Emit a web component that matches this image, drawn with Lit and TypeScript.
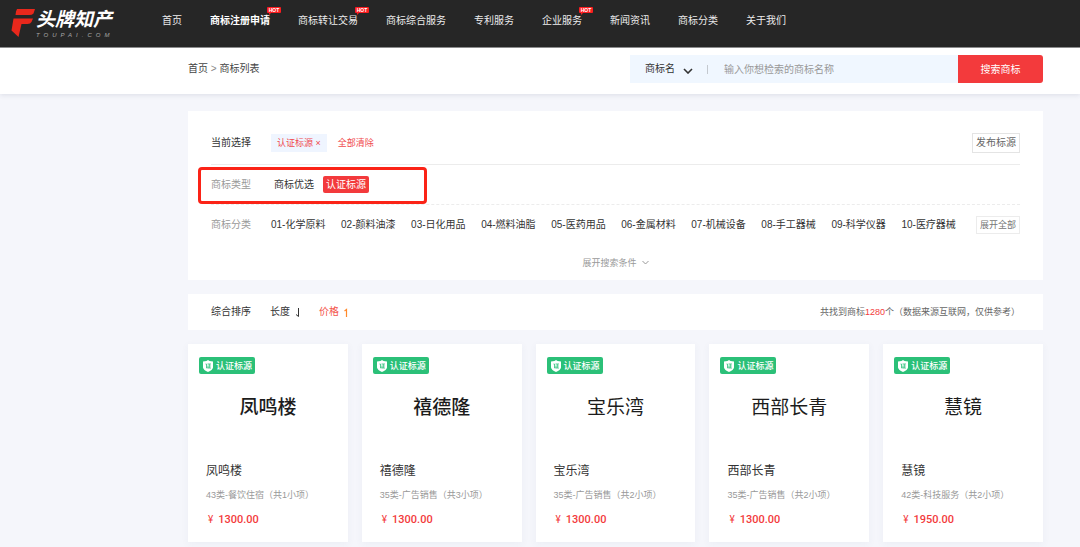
import { LitElement, html, css, svg, nothing } from "lit";
import { customElement, property } from "lit/decorators.js";
import { classMap } from "lit/directives/class-map.js";

interface Mark {
  name: string;
  kind: string;
  price: string;
  face: string;
}

const NAV = [
  { label: "首页" },
  { label: "商标注册申请", hot: true, active: true },
  { label: "商标转让交易", hot: true },
  { label: "商标综合服务" },
  { label: "专利服务" },
  { label: "企业服务", hot: true },
  { label: "新闻资讯" },
  { label: "商标分类" },
  { label: "关于我们" },
];

const CATEGORIES = [
  "01-化学原料", "02-颜料油漆", "03-日化用品", "04-燃料油脂", "05-医药用品",
  "06-金属材料", "07-机械设备", "08-手工器械", "09-科学仪器", "10-医疗器械",
];

const MARKS: Mark[] = [
  { name: "凤鸣楼", kind: "43类-餐饮住宿（共1小项）", price: "1300.00", face: "medium" },
  { name: "禧德隆", kind: "35类-广告销售（共3小项）", price: "1300.00", face: "medium" },
  { name: "宝乐湾", kind: "35类-广告销售（共2小项）", price: "1300.00", face: "regular" },
  { name: "西部长青", kind: "35类-广告销售（共2小项）", price: "1300.00", face: "regular" },
  { name: "慧镜", kind: "42类-科技服务（共2小项）", price: "1950.00", face: "regular" },
];

const base = css`
  * { box-sizing: border-box; }
  a { color: inherit; text-decoration: none; }
  button, select, input {
    font: inherit; color: inherit; border: 0; margin: 0; padding: 0;
    background: none; outline: none;
  }
  button { cursor: pointer; }
`;

@customElement("site-header")
class SiteHeader extends LitElement {
  static styles = [base, css`
    :host { display: block; background: #262626; border-bottom: 1px solid #8f8f8f; }
    .bar { display: flex; height: 47px; }
    .logo { display: flex; width: 162px; padding: 8px 0 0 11px; color: #fff; }
    .mark { width: 25px; height: 30px; flex: none; }
    .words { display: flex; flex-direction: column; }
    .cn { font-size: 19px; line-height: 24px; font-weight: 700; font-style: italic; white-space: nowrap; }
    .en { font: italic 6px/6px "Liberation Sans", sans-serif; letter-spacing: 4px; color: #a8a8a8; white-space: nowrap; }
    .nav { display: flex; gap: 28px; height: 42px; align-items: center; margin: 0; padding: 0; list-style: none; }
    .item { position: relative; color: #ececec; white-space: nowrap; }
    .item.active { font-weight: 700; color: #fff; }
    .hot {
      position: absolute; left: 100%; top: -7px; margin-left: -3px; width: 14px; height: 6px;
      background: #fb1d20; border-radius: 1px; color: #fff; text-align: center;
      font: 700 5px/6px "Liberation Sans", sans-serif;
    }
    .hot::after {
      content: ""; position: absolute; left: 2px; top: 6px;
      border-left: 2px solid #fb1d20; border-bottom: 2px solid transparent;
    }
  `];

  render() {
    return html`
      <header class="bar">
        <a class="logo" href="#">
          <svg class="mark" viewBox="0 0 25 30" aria-hidden="true">
            <path d="M6 1H24L22.500 5.500Q21 7 18.500 7H4.500L5 3.500Z" fill="#e8281c" />
            <path d="M2.500 10.500H22L20.500 14Q19.500 16 16.500 16H10.500L7.500 29L.5 22.500Z" fill="#e8281c" />
          </svg>
          <span class="words"><span class="cn">头牌知产</span><span class="en">TOUPAI.COM</span></span>
        </a>
        <nav>
          <ul class="nav">
            ${NAV.map((n) => html`
              <li class=${classMap({ item: true, active: !!n.active })}>
                <a href="#">${n.label}</a>${n.hot ? html`<span class="hot">HOT</span>` : nothing}
              </li>`)}
          </ul>
        </nav>
      </header>`;
  }
}

@customElement("search-bar")
class SearchBar extends LitElement {
  static styles = [base, css`
    :host { display: block; background: #fff; box-shadow: 0 1px 5px rgba(40, 50, 80, 0.12); }
    .row { display: flex; justify-content: space-between; margin: 0 37px 0 188px; padding: 7px 0 11px; }
    .crumbs { line-height: 28px; color: #444; }
    .sep { color: #888; font-family: "Liberation Sans", sans-serif; }
    .search { display: flex; height: 28px; width: 413px; }
    .field { display: flex; flex: 1; align-items: center; background: #f0f7ff; padding-left: 15px; }
    .pick { display: grid; align-items: center; width: 48px; color: #333; }
    .pick > * { grid-area: 1 / 1; }
    .select { appearance: none; width: 48px; height: 28px; }
    .chev { width: 10px; height: 6px; justify-self: end; margin-top: 3px; pointer-events: none; }
    .line { width: 1px; height: 9px; background: #c4c9cf; margin: 0 16px 0 14px; }
    .input { flex: 1; min-width: 0; height: 28px; color: #333; }
    .input::placeholder { color: #999; opacity: 1; }
    .go { width: 85px; padding-top: 1px; background: #f33a3c; color: #fff; border-radius: 0 3px 3px 0; }
  `];

  render() {
    return html`
      <div class="row">
        <nav class="crumbs"><a href="#">首页</a> <span class="sep">&gt;</span> <a href="#">商标列表</a></nav>
        <form class="search" @submit=${(e: Event) => e.preventDefault()}>
          <div class="field">
            <label class="pick">
              <select class="select" aria-label="商标名"><option>商标名</option></select>
              <svg class="chev" viewBox="0 0 10 6" aria-hidden="true">
                <path d="M1 1L5 5L9 1" fill="none" stroke="#333" stroke-width="1.600" />
              </svg>
            </label>
            <span class="line"></span>
            <input class="input" type="text" aria-label="输入你想检索的商标名称" placeholder="输入你想检索的商标名称" />
          </div>
          <button class="go" type="submit">搜索商标</button>
        </form>
      </div>`;
  }
}

@customElement("filter-panel")
class FilterPanel extends LitElement {
  static styles = [base, css`
    :host { display: block; background: #fff; padding: 0 23px; color: #333; }
    .row { display: flex; align-items: center; height: 40px; }
    .current { height: 54px; padding-top: 11px; border-bottom: 1px solid #ececec; }
    .type { position: relative; border-bottom: 1px dashed #ececec; }
    .label { width: 60px; flex: none; }
    .muted { color: #999; }
    .chip { height: 18px; padding: 0 6px; background: #eff5ff; color: #f0494d; font-size: 9px; line-height: 18px; }
    .clear { margin-left: 11px; color: #f0494d; font-size: 9px; }
    .publish { margin-left: auto; width: 48px; height: 20px; border: 1px solid #e4e4e4; color: #666; }
    .option { padding: 0 3px; line-height: 17px; }
    .option + .option { margin-left: 6px; }
    .option.on { background: #f33a3c; color: #fff; border-radius: 2px; }
    .frame {
      position: absolute; left: -13px; top: 2px; width: 229px; height: 37px;
      border: 3px solid #fb2317; border-radius: 4px; pointer-events: none;
    }
    .cats { display: flex; flex: 1; justify-content: space-between; margin-right: 20px; white-space: nowrap; }
    .all { width: 44px; height: 18px; border: 1px solid #ececec; color: #777; font-size: 9px; }
    .more { display: flex; justify-content: center; align-items: center; height: 35px; }
    .expand { display: flex; align-items: center; gap: 5px; color: #999; font-size: 9px; }
    .chev { width: 7px; height: 5px; }
  `];

  render() {
    return html`
      <div class="row current">
        <span class="label">当前选择</span>
        <button class="chip">认证标源 ×</button>
        <button class="clear">全部清除</button>
        <button class="publish">发布标源</button>
      </div>
      <div class="row type">
        <span class="label muted">商标类型</span>
        <a class="option" href="#">商标优选</a>
        <a class="option on" href="#">认证标源</a>
        <span class="frame"></span>
      </div>
      <div class="row">
        <span class="label muted">商标分类</span>
        <div class="cats">${CATEGORIES.map((c) => html`<a href="#">${c}</a>`)}</div>
        <button class="all">展开全部</button>
      </div>
      <div class="more">
        <button class="expand">展开搜索条件
          <svg class="chev" viewBox="0 0 7 5" aria-hidden="true">
            <path d="M.5 1L3.500 4L6.500 1" fill="none" stroke="#999" />
          </svg>
        </button>
      </div>`;
  }
}

@customElement("sort-bar")
class SortBar extends LitElement {
  static styles = [base, css`
    :host { display: flex; align-items: center; gap: 19px; height: 36px; padding: 0 23px; background: #fff; color: #333; }
    .sort { display: flex; align-items: center; gap: 4px; }
    .sort.on { color: #f4544a; }
    .arrow { width: 6px; height: 9px; }
    .total { margin-left: auto; color: #666; font-size: 9px; }
    .num { color: #f33a3c; }
  `];

  render() {
    const down = svg`<path d="M4.500 0V8.500L2 6.500" fill="none" stroke="#333" />`;
    const up = svg`<path d="M3.500 9V1.500L1.500 3" fill="none" stroke="#ff8a2c" stroke-width="1.200" />`;
    return html`
      <button class="sort">综合排序</button>
      <button class="sort">长度<svg class="arrow" viewBox="0 0 6 9" aria-hidden="true">${down}</svg></button>
      <button class="sort on">价格<svg class="arrow" viewBox="0 0 6 9" aria-hidden="true">${up}</svg></button>
      <span class="total">共找到商标<span class="num">1280</span>个（数据来源互联网，仅供参考）</span>`;
  }
}

@customElement("mark-card")
class MarkCard extends LitElement {
  @property({ attribute: false }) mark!: Mark;

  static styles = [base, css`
    :host { display: block; background: #fff; box-shadow: 0 2px 8px rgba(60, 70, 110, 0.05); height: 198px; }
    .link { display: block; padding: 13px 11px 0; }
    .tag {
      display: flex; align-items: center; gap: 3px; width: 56px; height: 17px; padding-left: 4px;
      background: #2bc078; border-radius: 2px; color: #fff; font-size: 9px; font-weight: 500; white-space: nowrap;
    }
    .shield { width: 10px; height: 12px; flex: none; }
    .art { margin-top: 18px; text-align: center; color: #1c1c1c; font-size: 19px; line-height: 32px; }
    .medium { font-weight: 500; }
    .regular { font-weight: 400; }
    .info { padding: 37px 7px 0; }
    .name { font-size: 12px; line-height: 20px; font-weight: 400; color: #333; margin: 0; }
    .kind { font-size: 9px; line-height: 14px; color: #999; margin: 7px 0 0; white-space: nowrap; }
    .price { display: flex; gap: 5px; margin: 10px 0 0; padding-left: 2px; color: #f33a3c; font: 500 11px/16px Roboto, sans-serif; }
    .yen { font-size: 10px; font-weight: 400; }
  `];

  render() {
    const m = this.mark;
    return html`
      <a class="link" href="#">
        <span class="tag">
          <svg class="shield" viewBox="0 0 10 12" aria-hidden="true">
            <path d="M5 0L6.500 1L10 1.500V7.500Q9.500 10 5 12Q.5 10 0 7.500V1.500L3.500 1Z" fill="#fff" />
            <path d="M2.500 4H3.500V8L4.300 7.300M4.500 4H8M6.300 4V8M6.300 6H7.800M5 5.500V8M4.300 8H8" fill="none" stroke="#2bc078" stroke-width=".8" />
          </svg>认证标源
        </span>
        <div class="art ${m.face}">${m.name}</div>
        <div class="info">
          <h3 class="name">${m.name}</h3>
          <p class="kind">${m.kind}</p>
          <p class="price"><span class="yen">¥</span>${m.price}</p>
        </div>
      </a>`;
  }
}

@customElement("app-root")
class AppRoot extends LitElement {
  static styles = [base, css`
    :host {
      display: block; min-height: 100vh; background: #f5f6fb; padding-bottom: 5px;
      font: 10px/14px "Liberation Sans", "Noto Sans CJK SC", sans-serif; color: #333;
    }
    .search { position: relative; }
    .main { display: flex; flex-direction: column; gap: 14px; margin: 17px 37px 0 188px; }
    .cards { display: grid; grid-template-columns: repeat(5, minmax(0, 1fr)); gap: 14px; }
  `];

  render() {
    return html`
      <site-header></site-header>
      <search-bar class="search"></search-bar>
      <main class="main">
        <filter-panel></filter-panel>
        <sort-bar></sort-bar>
        <div class="cards">${MARKS.map((m) => html`<mark-card .mark=${m}></mark-card>`)}</div>
      </main>`;
  }
}
